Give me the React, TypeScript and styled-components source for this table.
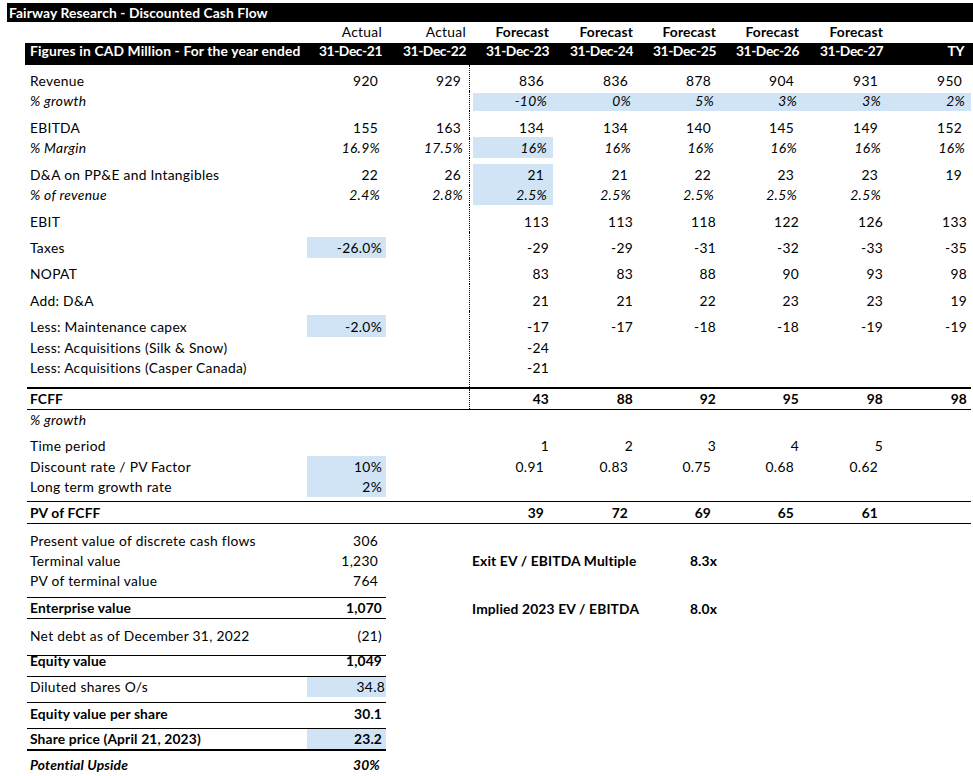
import React from 'react';
import styled, { createGlobalStyle } from 'styled-components';

const FILL = '#d0e4f5';
const FONT = `Lato, "Noto Sans", "Liberation Sans", sans-serif`;
const COLS = '280px 79px 83px 84px 84px 83px 83px 84px 84px';

const GlobalStyle = createGlobalStyle`
  html, body { margin: 0; padding: 0; background: #ffffff; }
  body { font-family: ${FONT}; font-size: 13.8px; letter-spacing: 0.3px; color: #000; }
  * { box-sizing: border-box; }
`;

const Sheet = styled.main`
  width: 973px;
  padding: 3px 0 0 7px;
`;

const TitleBar = styled.h1`
  margin: 0;
  height: 19px;
  line-height: 19px;
  padding-left: 2px;
  background: #000;
  color: #fff;
  font-size: 13.8px;
  font-weight: 700;
  letter-spacing: 0.1px;
  white-space: nowrap;
`;

const Table = styled.section`
  margin-left: 20px;
  width: 944px;
`;

const Row = styled.div<{ $h: number; $top?: number; $bottom?: number }>`
  display: grid;
  grid-template-columns: ${COLS};
  grid-template-rows: minmax(0, 1fr);
  height: ${(p) => p.$h + (p.$top ?? 0) + (p.$bottom ?? 0)}px;
  border-top: ${(p) => (p.$top ? `${p.$top}px solid #000` : 'none')};
  border-bottom: ${(p) => (p.$bottom ? `${p.$bottom}px solid #000` : 'none')};
`;

const BandRow = styled(Row)`
  margin: 0 -2px;
  padding: 0 2px;
  background: #000;
  color: #fff;
  font-weight: 700;
  letter-spacing: 0.15px;
`;

const Cell = styled.div<{ $divider?: boolean; $pb?: number }>`
  display: flex;
  flex-direction: column;
  justify-content: flex-end;
  min-width: 0;
  min-height: 0;
  padding-bottom: ${(p) => p.$pb ?? 0}px;
  border-left: ${(p) => (p.$divider ? '1px dotted #000' : 'none')};
`;

const Value = styled.div<{
  $num?: boolean;
  $pr?: number;
  $fill?: boolean;
  $h?: number;
  $italic?: boolean;
  $bold?: boolean;
  $inset?: boolean;
  $mid?: boolean;
  $tight?: boolean;
}>`
  flex: none;
  height: ${(p) => p.$h ?? 20}px;
  line-height: 20px;
  display: flex;
  align-items: ${(p) => (p.$mid ? 'center' : 'flex-end')};
  justify-content: ${(p) => (p.$num ? 'flex-end' : 'flex-start')};
  padding: 0 ${(p) => p.$pr ?? 0}px 0 ${(p) => (p.$num ? 0 : 3)}px;
  margin-left: ${(p) => (p.$inset ? 3 : 0)}px;
  background: ${(p) => (p.$fill ? FILL : 'transparent')};
  font-style: ${(p) => (p.$italic ? 'italic' : 'normal')};
  font-weight: ${(p) => (p.$bold ? 700 : 'inherit')};
  letter-spacing: ${(p) => (p.$tight ? '-0.4px' : p.$bold ? '0.15px' : 'inherit')};
  white-space: nowrap;
`;

const Summary = styled.section`
  display: flex;
  margin-left: 20px;
`;

const SummaryTable = styled.div`
  width: 359px;
`;

const SummaryRow = styled(Row)`
  grid-template-columns: 280px 79px;
`;

const Multiples = styled.div`
  margin-left: 83px;
  padding-top: 27px;
  display: grid;
  grid-template-columns: 168px 83px;
  grid-auto-rows: 20px;
  row-gap: 28px;
  align-content: start;
  font-weight: 700;
  letter-spacing: 0.15px;
`;

const MultLabel = styled.div`
  line-height: 20px;
  padding-left: 3px;
  white-space: nowrap;
`;

const MultValue = styled.div`
  line-height: 20px;
  padding-right: 3px;
  text-align: right;
`;

type Num = string | null;

interface LineItem {
  label: string;
  h: number;
  vals?: Num[];
  pb?: number;
  italic?: boolean;
  bold?: boolean;
  pr?: number[];
  fill?: number[];
  top?: number;
  bottom?: number;
  divider?: boolean;
  vh?: number;
}

const pa = (a: number, f: number) => [a, a, f, f, f, f, f, f];

const upper: LineItem[] = [
  { label: 'Revenue', h: 26, vals: ['920', '929', '836', '836', '878', '904', '931', '950'], pr: pa(8, 9), divider: true },
  { label: '% growth', h: 20, italic: true, vals: [null, null, '-10%', '0%', '5%', '3%', '3%', '2%'], pr: pa(6, 6), fill: [2, 3, 4, 5, 6, 7], vh: 18, divider: true },
  { label: 'EBITDA', h: 27, vals: ['155', '163', '134', '134', '140', '145', '149', '152'], pr: pa(8, 9), divider: true },
  { label: '% Margin', h: 20, italic: true, vals: ['16.9%', '17.5%', '16%', '16%', '16%', '16%', '16%', '16%'], pr: pa(6, 6), fill: [2], vh: 21, divider: true },
  { label: 'D&A on PP&E and Intangibles', h: 27, vals: ['22', '26', '21', '21', '22', '23', '23', '19'], pr: pa(8, 9), fill: [2], vh: 21, divider: true },
  { label: '% of revenue', h: 20, italic: true, vals: ['2.4%', '2.8%', '2.5%', '2.5%', '2.5%', '2.5%', '2.5%', null], pr: pa(6, 6), fill: [2], divider: true },
  { label: 'EBIT', h: 27, vals: [null, null, '113', '113', '118', '122', '126', '133'], pr: pa(4, 4), divider: true },
  { label: 'Taxes', h: 26, vals: ['-26.0%', null, '-29', '-29', '-31', '-32', '-33', '-35'], pr: pa(4, 4), fill: [0], vh: 21, divider: true },
  { label: 'NOPAT', h: 26, vals: [null, null, '83', '83', '88', '90', '93', '98'], pr: pa(4, 4), divider: true },
  { label: 'Add: D&A', h: 27, vals: [null, null, '21', '21', '22', '23', '23', '19'], pr: pa(4, 4), divider: true },
  { label: 'Less: Maintenance capex', h: 26, vals: ['-2.0%', null, '-17', '-17', '-18', '-18', '-19', '-19'], pr: pa(4, 4), fill: [0], vh: 22, divider: true },
  { label: 'Less: Acquisitions (Silk & Snow)', h: 21, vals: [null, null, '-24'], pr: pa(4, 4), divider: true },
  { label: 'Less: Acquisitions (Casper Canada)', h: 29, pb: 9, vals: [null, null, '-21'], pr: pa(4, 4), divider: true },
  { label: 'FCFF', h: 20, top: 2, bottom: 1, bold: true, vals: [null, null, '43', '88', '92', '95', '98', '98'], pr: pa(4, 4), divider: true },
  { label: '% growth', h: 20, italic: true },
  { label: 'Time period', h: 26, vals: [null, null, '1', '2', '3', '4', '5'], pr: pa(4, 4) },
  { label: 'Discount rate / PV Factor', h: 21, vals: ['10%', null, '0.91', '0.83', '0.75', '0.68', '0.62'], pr: pa(4, 9), fill: [0], vh: 21 },
  { label: 'Long term growth rate', h: 24, pb: 4, vals: ['2%'], pr: pa(4, 4), fill: [0] },
  { label: 'PV of FCFF', h: 21, top: 1, bottom: 1, bold: true, vals: [null, null, '39', '72', '69', '65', '61'], pr: pa(4, 9) },
];

interface SummaryItem {
  label: string;
  value: string;
  h: number;
  pr: number;
  pb?: number;
  vh?: number;
  mid?: boolean;
  top?: number;
  bottom?: number;
  bold?: boolean;
  italic?: boolean;
  fill?: boolean;
}

const summary: SummaryItem[] = [
  { label: 'Present value of discrete cash flows', value: '306', h: 27, pr: 8 },
  { label: 'Terminal value', value: '1,230', h: 20, pr: 8 },
  { label: 'PV of terminal value', value: '764', h: 26, pb: 6, pr: 8 },
  { label: 'Enterprise value', value: '1,070', h: 20, top: 1, bottom: 1, bold: true, pr: 4 },
  { label: 'Net debt as of December 31, 2022', value: '(21)', h: 36, pb: 9, pr: 4 },
  { label: 'Equity value', value: '1,049', h: 20, top: 1, bottom: 1, pb: 10, vh: 10, mid: true, bold: true, pr: 4 },
  { label: 'Diluted shares O/s', value: '34.8', h: 25, pb: 5, pr: 1, fill: true },
  { label: 'Equity value per share', value: '30.1', h: 25, top: 1, bottom: 1, pb: 4, bold: true, pr: 4 },
  { label: 'Share price (April 21, 2023)', value: '23.2', h: 20, bottom: 2, bold: true, pr: 4, fill: true },
  { label: 'Potential Upside', value: '30%', h: 24, bold: true, italic: true, pr: 6 },
];

const headerTop = ['Actual', 'Actual', 'Forecast', 'Forecast', 'Forecast', 'Forecast', 'Forecast', ''];
const headerDates = ['31-Dec-21', '31-Dec-22', '31-Dec-23', '31-Dec-24', '31-Dec-25', '31-Dec-26', '31-Dec-27', 'TY'];
const datePad = [4, 3, 4, 4, 4, 4, 4, 7];

function LineRow({ item }: { item: LineItem }) {
  const vals = item.vals ?? [];
  const pr = item.pr ?? pa(4, 4);
  const fill = item.fill ?? [];
  return (
    <Row $h={item.h} $top={item.top} $bottom={item.bottom}>
      <Cell $pb={item.pb}>
        <Value $italic={item.italic} $bold={item.bold}>
          {item.label}
        </Value>
      </Cell>
      {pr.map((p, i) => (
        <Cell key={i} $pb={item.pb} $divider={item.divider && i === 2}>
          <Value
            $num
            $pr={p}
            $fill={fill.includes(i)}
            $h={fill.includes(i) ? item.vh : undefined}
            $inset={item.divider && i === 2 && fill.includes(i)}
            $italic={item.italic}
            $bold={item.bold}
          >
            {vals[i] ?? ''}
          </Value>
        </Cell>
      ))}
    </Row>
  );
}

export default function App() {
  return (
    <>
      <GlobalStyle />
      <Sheet>
        <TitleBar>Fairway Research - Discounted Cash Flow</TitleBar>
        <Table>
          <Row $h={21}>
            <Cell />
            {headerTop.map((t, i) => (
              <Cell key={i} $pb={1}>
                <Value $num $pr={datePad[i]} $bold={i >= 2}>
                  {t}
                </Value>
              </Cell>
            ))}
          </Row>
          <BandRow $h={22}>
            <Cell $pb={4}>
              <Value>Figures in CAD Million - For the year ended</Value>
            </Cell>
            {headerDates.map((d, i) => (
              <Cell key={i} $pb={4}>
                <Value $num $pr={datePad[i]} $tight>
                  {d}
                </Value>
              </Cell>
            ))}
          </BandRow>
          {upper.map((item, i) => (
            <LineRow key={i} item={item} />
          ))}
        </Table>
        <Summary>
          <SummaryTable>
            {summary.map((s, i) => (
              <SummaryRow key={i} $h={s.h} $top={s.top} $bottom={s.bottom}>
                <Cell $pb={s.pb}>
                  <Value $h={s.vh} $mid={s.mid} $bold={s.bold} $italic={s.italic}>
                    {s.label}
                  </Value>
                </Cell>
                <Cell $pb={s.pb}>
                  <Value
                    $num
                    $h={s.vh}
                    $mid={s.mid}
                    $pr={s.pr}
                    $fill={s.fill}
                    $bold={s.bold}
                    $italic={s.italic}
                  >
                    {s.value}
                  </Value>
                </Cell>
              </SummaryRow>
            ))}
          </SummaryTable>
          <Multiples>
            <MultLabel>Exit EV / EBITDA Multiple</MultLabel>
            <MultValue>8.3x</MultValue>
            <MultLabel>Implied 2023 EV / EBITDA</MultLabel>
            <MultValue>8.0x</MultValue>
          </Multiples>
        </Summary>
      </Sheet>
    </>
  );
}
